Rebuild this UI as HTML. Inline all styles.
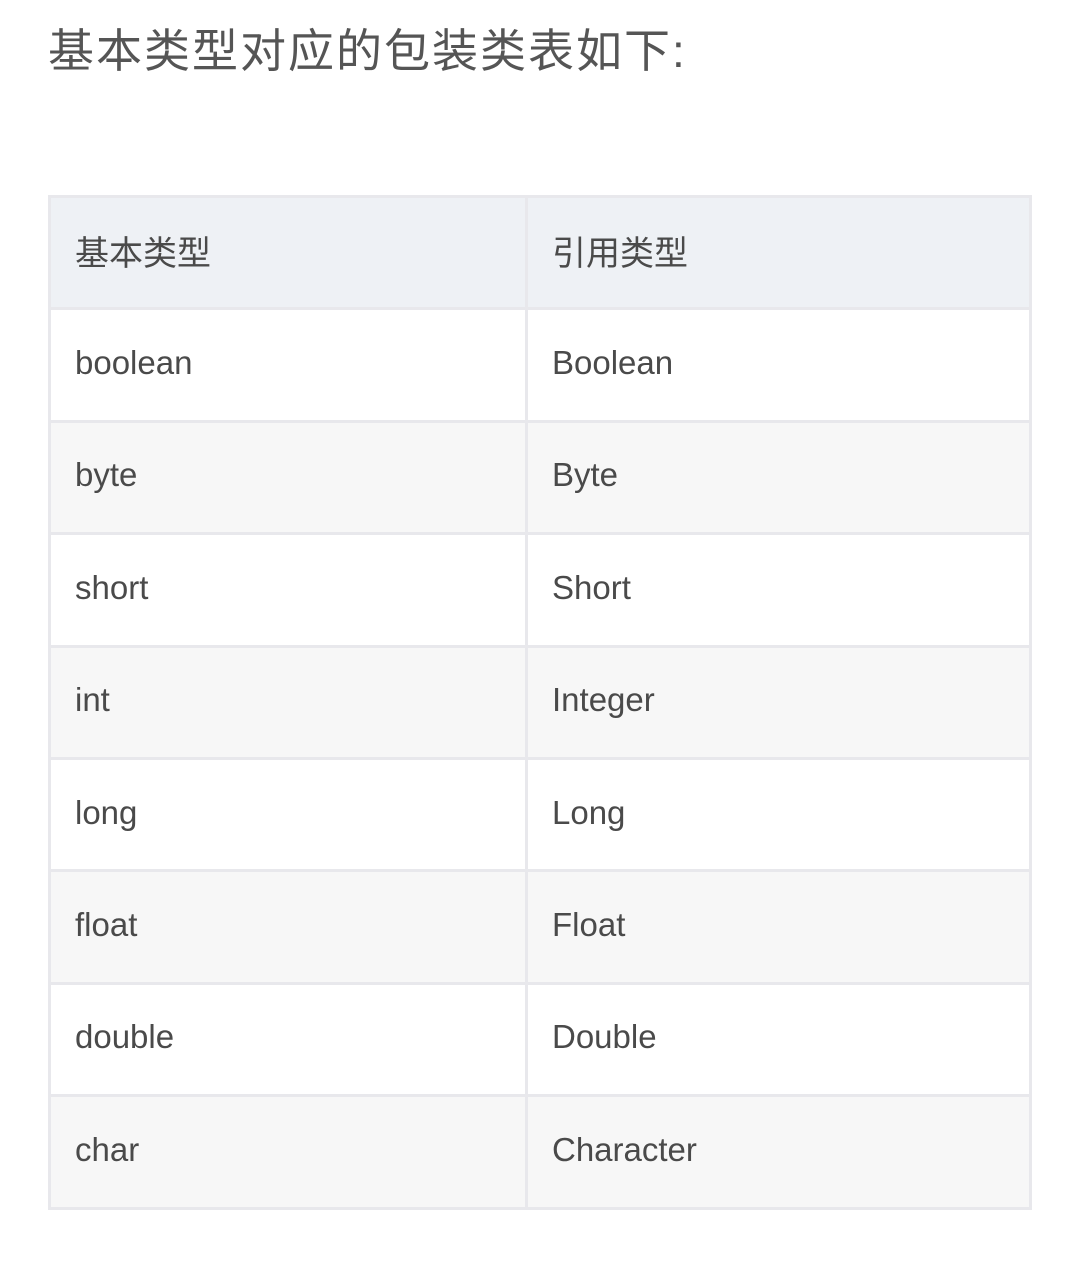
<!DOCTYPE html>
<html><head><meta charset="utf-8"><style>
body{margin:0;width:1072px;height:1279px;background:#fff;font-family:"Liberation Sans","Noto Sans CJK SC",sans-serif;color:#4a4a4a;position:relative;overflow:hidden}
h1{position:absolute;left:48px;top:20px;margin:0;font-weight:normal;font-size:46px;line-height:62px;color:#555;letter-spacing:2px}
table{position:absolute;left:48px;top:195px;width:984px;border-collapse:collapse;table-layout:fixed}
td{border:3px solid #e8e8ec;height:112.4px;padding:0 0 4px 24px;font-size:33px;vertical-align:middle;box-sizing:border-box}
td:first-child{width:477px}
tr.h td{background:#eef1f5;font-size:34px}
tr:nth-child(odd):not(.h) td{background:#f7f7f7}
</style></head><body>
<h1>基本类型对应的包装类表如下:</h1>
<table>
<tr class="h"><td>基本类型</td><td>引用类型</td></tr>
<tr><td>boolean</td><td>Boolean</td></tr>
<tr><td>byte</td><td>Byte</td></tr>
<tr><td>short</td><td>Short</td></tr>
<tr><td>int</td><td>Integer</td></tr>
<tr><td>long</td><td>Long</td></tr>
<tr><td>float</td><td>Float</td></tr>
<tr><td>double</td><td>Double</td></tr>
<tr><td>char</td><td>Character</td></tr>
</table>
</body></html>
